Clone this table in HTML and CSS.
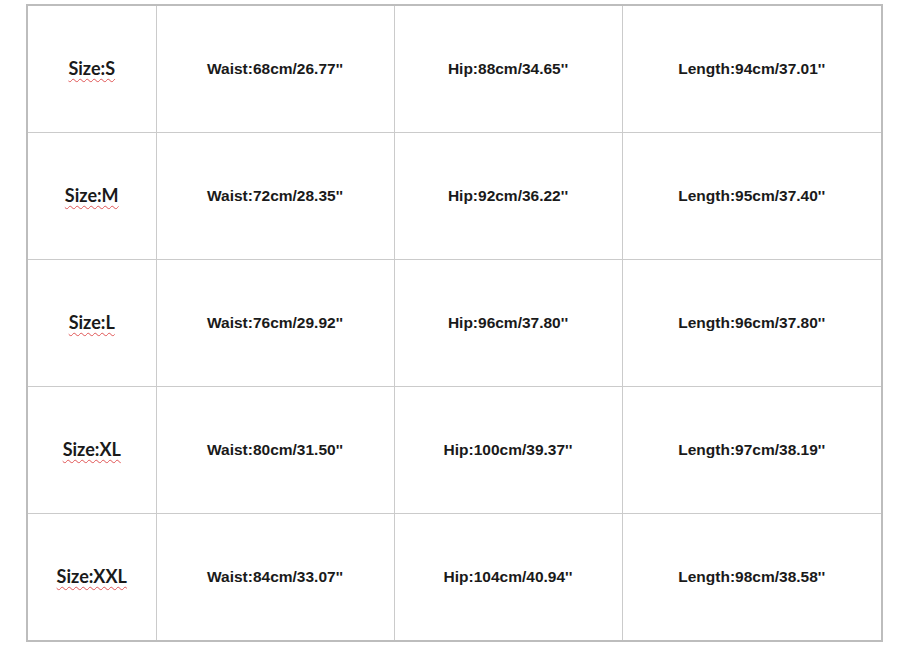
FILE: index.html
```html
<!DOCTYPE html>
<html>
<head>
<meta charset="utf-8">
<link rel="stylesheet" href="styles.css">
</head>
<body>
<table class="size-table">
  <colgroup>
    <col class="c1"><col class="c2"><col class="c3"><col class="c4">
  </colgroup>
  <tr>
    <td><span class="size">Size:S</span></td>
    <td>Waist:68cm/26.77''</td>
    <td>Hip:88cm/34.65''</td>
    <td>Length:94cm/37.01''</td>
  </tr>
  <tr>
    <td><span class="size">Size:M</span></td>
    <td>Waist:72cm/28.35''</td>
    <td>Hip:92cm/36.22''</td>
    <td>Length:95cm/37.40''</td>
  </tr>
  <tr>
    <td><span class="size">Size:L</span></td>
    <td>Waist:76cm/29.92''</td>
    <td>Hip:96cm/37.80''</td>
    <td>Length:96cm/37.80''</td>
  </tr>
  <tr>
    <td><span class="size">Size:XL</span></td>
    <td>Waist:80cm/31.50''</td>
    <td>Hip:100cm/39.37''</td>
    <td>Length:97cm/38.19''</td>
  </tr>
  <tr>
    <td><span class="size">Size:XXL</span></td>
    <td>Waist:84cm/33.07''</td>
    <td>Hip:104cm/40.94''</td>
    <td>Length:98cm/38.58''</td>
  </tr>
</table>
</body>
</html>
```

FILE: styles.css
```css
html, body {
  margin: 0;
  padding: 0;
  background: #ffffff;
}
body {
  padding: 4px 0 0 26px;
}
.size-table {
  border-collapse: collapse;
  border: 2px solid #bdbdbd;
  table-layout: fixed;
  width: 856px;
}
.c1 { width: 129px; }
.c2 { width: 238px; }
.c3 { width: 228px; }
.c4 { width: 260px; }
.size-table td {
  border: 1px solid #cbcbcb;
  height: 126px;
  padding: 0;
  text-align: center;
  vertical-align: middle;
  font-family: "Liberation Sans", Arial, sans-serif;
  font-weight: bold;
  font-size: 15.5px;
  color: #1a1a1a;
}
.size {
  display: inline-block;
  margin-top: -3px;
  font-family: Lato, "Open Sans", sans-serif;
  font-weight: bold;
  font-size: 18px;
  color: #1a1a1a;
  text-decoration: underline wavy #e05555;
  text-decoration-thickness: 1px;
  text-underline-offset: 3px;
}
```
